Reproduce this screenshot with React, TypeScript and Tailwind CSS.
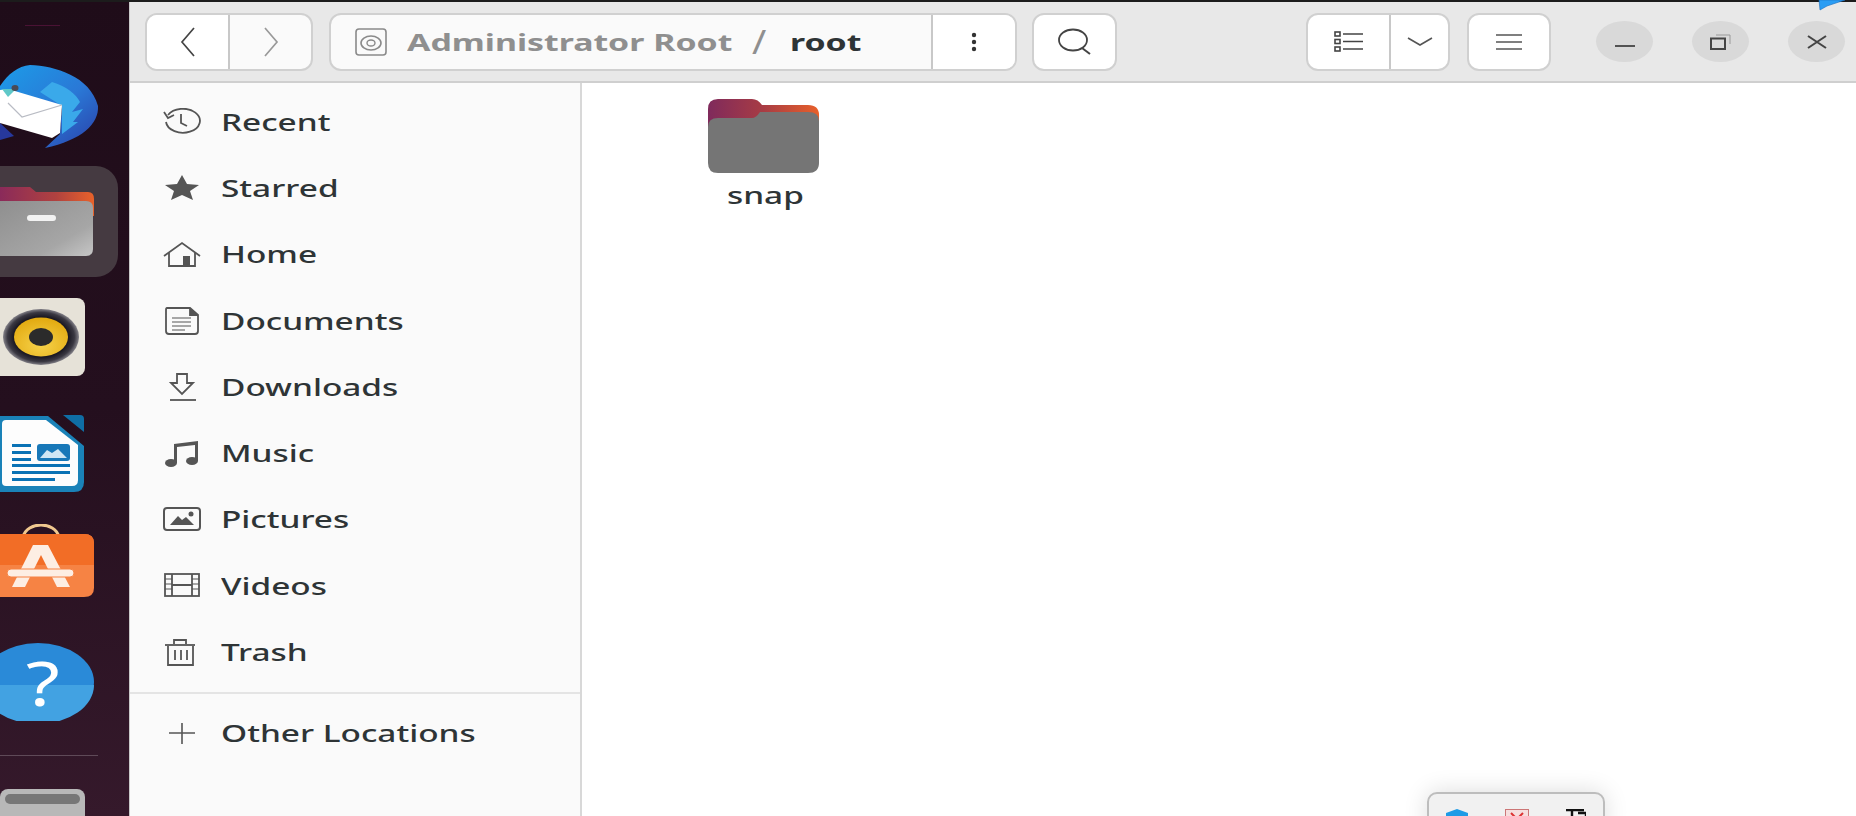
import React from 'react';

const font = "font-['Noto_Sans','DejaVu_Sans',sans-serif]";

// the capture is stretched sideways, so the labels are too
const Stretched = ({ children, className }: { children: React.ReactNode; className: string }) => (
  <span className={`inline-block origin-left whitespace-nowrap ${className}`}>{children}</span>
);

const Thunderbird = () => (
  <svg viewBox="0 0 130 90" className="block h-[90px] w-[130px]">
    <defs>
      <linearGradient id="tb" x1="0" y1="0" x2="1" y2="1">
        <stop offset="0" stopColor="#1c9ce8" />
        <stop offset="0.55" stopColor="#2a78d6" />
        <stop offset="1" stopColor="#2a3fa8" />
      </linearGradient>
    </defs>
    <path d="M0 24 C8 12 18 4 30 3 C55 4 90 14 98 44 C99 62 82 78 45 86 L60 72 L62 44 L8 28 L0 32 Z" fill="url(#tb)" />
    <path d="M52 20 C66 24 76 32 80 40 L72 50 L83 47 L73 60 L78 60 L62 72 L62 44 L40 30 Z" fill="#3aa9ea" />
    <path d="M0 61 L14 74 L0 78 Z" fill="#27389c" />
    <path d="M0 28 L8 27 L62 43 L60 71 L52 76 L0 61 Z" fill="#fff" />
    <path d="M8 41 L22 55 L62 43" fill="none" stroke="#b9bcc4" strokeWidth="1.2" />
    <path d="M2 27 L16 27 L8 35 Z" fill="#5fc8c8" />
    <ellipse cx="15" cy="26" rx="3.5" ry="3" fill="#4a4a55" />
  </svg>
);

const FilesIcon = () => (
  <div className="flex h-[111px] w-[118px] items-center rounded-r-[22px] bg-[#453a41]">
    <svg viewBox="0 0 118 111" className="block h-[111px] w-[118px]">
      <defs>
        <linearGradient id="tab" x1="0" y1="0" x2="1" y2="0">
          <stop offset="0" stopColor="#8a2a5a" />
          <stop offset="0.6" stopColor="#b0423f" />
          <stop offset="1" stopColor="#e8622a" />
        </linearGradient>
        <linearGradient id="front" x1="0" y1="0" x2="1" y2="1">
          <stop offset="0" stopColor="#8f8f8f" />
          <stop offset="0.7" stopColor="#a6a6a6" />
          <stop offset="1" stopColor="#c6c6c6" />
        </linearGradient>
      </defs>
      <path d="M0 21 H30 L36 26 H88 Q94 26 94 33 V50 H0 Z" fill="url(#tab)" />
      <path d="M0 35 H86 Q93 35 93 42 V83 Q93 90 86 90 H0 Z" fill="url(#front)" />
      <rect x="27" y="49" width="29" height="6" rx="3" fill="#f2f2f2" />
    </svg>
  </div>
);

const Rhythmbox = () => (
  <svg viewBox="0 0 130 80" className="block h-[80px] w-[130px]">
    <defs>
      <radialGradient id="ring">
        <stop offset="0.7" stopColor="#17151f" />
        <stop offset="0.88" stopColor="#3a3842" />
        <stop offset="1" stopColor="#85838a" />
      </radialGradient>
      <radialGradient id="cone" cx="0.5" cy="0.7" r="0.7">
        <stop offset="0" stopColor="#f6d24a" />
        <stop offset="1" stopColor="#e2a90f" />
      </radialGradient>
    </defs>
    <rect x="-10" y="0" width="95" height="78" rx="8" fill="#e6e2d8" />
    <ellipse cx="41" cy="39" rx="38" ry="28" fill="url(#ring)" />
    <ellipse cx="41" cy="39" rx="27" ry="19.5" fill="url(#cone)" />
    <ellipse cx="41" cy="39" rx="12" ry="9" fill="#2b2b2b" />
  </svg>
);

const Writer = () => (
  <svg viewBox="0 0 130 80" className="block h-[80px] w-[130px]">
    <path d="M0 4 H48 L84 34 V70 Q84 80 74 80 H0 Z" fill="#1a82b8" />
    <path d="M63 3 H80 Q84 3 84 7 V20 Z" fill="#0f6ea5" />
    <path d="M6 8 H46 L78 33 V68 Q78 74 72 74 H6 Q2 74 2 70 V12 Q2 8 6 8 Z" fill="#fdfdfd" />
    <rect x="37" y="32" width="33" height="17" rx="3" fill="#1878b8" />
    <path d="M40 46 L47 38 L52 41 L58 37 L67 46 Z" fill="#cfe6f4" />
    <rect x="12" y="32" width="19" height="3" fill="#0a72b5" />
    <rect x="12" y="39" width="19" height="3" fill="#0a72b5" />
    <rect x="12" y="46" width="19" height="3" fill="#0a72b5" />
    <rect x="12" y="52" width="58" height="3" fill="#0a72b5" />
    <rect x="12" y="59" width="58" height="3" fill="#0a72b5" />
    <rect x="12" y="66" width="43" height="3" fill="#0a72b5" />
  </svg>
);

const SoftwareIcon = () => (
  <svg viewBox="0 0 130 76" className="block h-[76px] w-[130px]">
    <path d="M23 13 C27 -3 55 -3 59 13" fill="none" stroke="#f0c88f" strokeWidth="3" />
    <path d="M0 10 H84 Q94 10 94 19 V64 Q94 73 84 73 H0 Z" fill="#f68344" />
    <path d="M0 10 H84 Q94 10 94 19 V41 H0 Z" fill="#f26d26" />
    <path d="M33 21 L12 63 H25 L41 31 L57 63 H70 L48 21 Z" fill="#fdeee3" />
    <rect x="7" y="45" width="67" height="8" rx="4" fill="#fdeee3" stroke="#f68344" strokeWidth="1" />
  </svg>
);

const HelpIcon = () => (
  <div className="relative h-[78px] w-[130px]">
    <svg viewBox="0 0 130 78" className="block h-[78px] w-[130px]">
      <ellipse cx="38" cy="39" rx="56" ry="39" fill="#2a8ad8" />
      <path d="M-18 42 H94 A56 39 0 0 1 -18 42 Z" fill="#42a2e2" />
    </svg>
    <div className="absolute left-[26px] top-[2px] text-[62px] leading-[74px] text-white">
      <Stretched className="scale-x-[1.25]">?</Stretched>
    </div>
  </div>
);

const sideIcons: Record<string, React.ReactNode> = {
  Recent: (
    <g fill="none" stroke="#555" strokeWidth="1.8">
      <path d="M5 7 A17 12 0 1 1 3 14" />
      <path d="M1 4 L5 10 L11 7" />
      <path d="M18 6 V15 L24 18" />
    </g>
  ),
  Starred: <path d="M19 1 L24 10 L36 11 L27 17 L30 26 L19 21 L8 26 L11 17 L2 11 L14 10 Z" fill="#555" />,
  Home: (
    <g fill="none" stroke="#555" strokeWidth="1.8">
      <path d="M1 15 L19 2 L37 15" />
      <path d="M6 12 V25 H32 V12" />
      <rect x="20" y="15" width="7" height="10" fill="#555" stroke="none" />
    </g>
  ),
  Documents: (
    <g fill="none" stroke="#555" strokeWidth="1.8">
      <path d="M4 1 H27 L35 8 V24 Q35 27 32 27 H6 Q3 27 3 24 V3 Q3 1 4 1 Z" />
      <path d="M27 1 V8 H35" fill="#555" />
      <path d="M9 11 H28 M9 15 H28 M9 19 H28 M9 23 H22" strokeWidth="1.2" />
    </g>
  ),
  Downloads: (
    <g fill="none" stroke="#555" strokeWidth="1.8">
      <path d="M14 1 H24 V10 H30 L19 21 L8 10 H14 Z" />
      <path d="M7 27 H33" />
    </g>
  ),
  Music: (
    <g fill="#555" stroke="none">
      <path d="M11 5 L35 2 V22 H32 V6 L14 8 V24 H11 Z" />
      <ellipse cx="8" cy="24" rx="6" ry="4" />
      <ellipse cx="29" cy="22" rx="6" ry="4" />
    </g>
  ),
  Pictures: (
    <g fill="none" stroke="#555" strokeWidth="2">
      <rect x="1" y="2" width="36" height="22" rx="3" />
      <path d="M7 19 L15 10 L19 14 L23 11 L31 19 Z" fill="#555" stroke="none" />
      <circle cx="28" cy="8" r="2.5" fill="#555" stroke="none" />
    </g>
  ),
  Videos: (
    <g fill="none" stroke="#555" strokeWidth="1.8">
      <rect x="2" y="2" width="34" height="22" />
      <path d="M9 2 V24 M29 2 V24 M9 13 H29" />
      <path d="M2 7 H9 M2 12 H9 M2 17 H9 M29 7 H36 M29 12 H36 M29 17 H36" strokeWidth="1.2" />
    </g>
  ),
  Trash: (
    <g fill="none" stroke="#555" strokeWidth="1.8">
      <path d="M2 7 H32" />
      <path d="M11 6 V2 H23 V6" />
      <path d="M5 8 V27 H30 V8" />
      <path d="M12 12 V22 M18 12 V22 M24 12 V22" />
    </g>
  ),
};

const places = ['Recent', 'Starred', 'Home', 'Documents', 'Downloads', 'Music', 'Pictures', 'Videos', 'Trash'];

const SideRow = ({ name }: { name: string }) => (
  <div className="flex h-[66.25px] items-center pl-[33px]">
    <svg viewBox="0 0 38 28" className="h-[28px] w-[38px] shrink-0">
      {sideIcons[name]}
    </svg>
    <div className="ml-[20px] text-[23px] font-medium text-[#2e3436]">
      <Stretched className="scale-x-[1.45]">{name}</Stretched>
    </div>
  </div>
);

const App = () => {
  return (
    <div className={`relative flex h-[816px] w-[1856px] flex-col overflow-hidden ${font}`}>
      <div className="h-[2px] bg-[#1c1c1c]" />
      <div className="flex min-h-0 flex-1">
        {/* dock */}
        <div className="w-[130px] shrink-0 overflow-hidden border-r border-[#c9c9c9] bg-gradient-to-b from-[#1f0c19] via-[#240f1e] to-[#35192b]">
          <div className="mt-[23px] h-[1px] w-[35px] translate-x-[25px] bg-[#4a1234]" />
          <div className="mt-[36px]">
            <Thunderbird />
          </div>
          <div className="mt-[14px]">
            <FilesIcon />
          </div>
          <div className="mt-[21px]">
            <Rhythmbox />
          </div>
          <div className="mt-[34px]">
            <Writer />
          </div>
          <div className="mt-[32px]">
            <SoftwareIcon />
          </div>
          <div className="mt-[43px]">
            <HelpIcon />
          </div>
          <div className="mt-[34px] h-[1px] w-[98px] bg-[#5f4a58]" />
          <div className="relative mt-[33px] h-[30px] w-[85px] rounded-t-[8px] bg-[#b8b8b8] p-[5px]">
            <div className="h-[10px] rounded-[5px] bg-[#777]" />
          </div>
        </div>

        {/* window */}
        <div className="flex min-w-0 flex-1 flex-col bg-white">
          <div className="flex h-[81px] shrink-0 items-center border-b-2 border-[#cfcfcf] bg-[#e8e8e8] text-[#2e3436]">
            <div className="ml-[15px] flex h-[58px] w-[168px] rounded-[12px] border-2 border-[#d0d0d0] bg-[#fafafa]">
              <div className="flex w-[83px] items-center justify-center rounded-l-[10px] border-r-2 border-[#c8c8c8] bg-white">
                <svg viewBox="0 0 16 30" className="h-[30px] w-[16px]">
                  <path d="M14 1 L2 15 L14 29" fill="none" stroke="#444" strokeWidth="1.7" />
                </svg>
              </div>
              <div className="flex flex-1 items-center justify-center">
                <svg viewBox="0 0 16 30" className="h-[30px] w-[16px]">
                  <path d="M2 1 L14 15 L2 29" fill="none" stroke="#999" strokeWidth="1.7" />
                </svg>
              </div>
            </div>
            <div className="ml-[16px] flex h-[58px] w-[688px] rounded-[12px] border-2 border-[#d0d0d0] bg-[#fafafa]">
              <div className="flex flex-1 items-center">
                <svg viewBox="0 0 32 28" className="ml-[24px] h-[28px] w-[32px] shrink-0">
                  <rect x="1" y="1" width="30" height="26" rx="3" fill="none" stroke="#8a8a8a" strokeWidth="1.6" />
                  <ellipse cx="16" cy="15" rx="10" ry="7" fill="none" stroke="#8a8a8a" strokeWidth="1.6" />
                  <ellipse cx="16" cy="15" rx="4" ry="3" fill="none" stroke="#8a8a8a" strokeWidth="1.4" />
                </svg>
                <div className="ml-[20px] w-[345px] text-[24px] font-bold leading-[30px] text-[#8f8f8f]">
                  <Stretched className="scale-x-[1.41]">Administrator Root</Stretched>
                </div>
                <div className="text-[32px] leading-none text-[#8f8f8f]">
                  <Stretched className="scale-x-[1.2]">/</Stretched>
                </div>
                <div className="ml-[26px] text-[24px] font-bold leading-[30px] text-[#2e3436]">
                  <Stretched className="scale-x-[1.41]">root</Stretched>
                </div>
              </div>
              <div className="flex w-[84px] items-center justify-center rounded-r-[10px] border-l-2 border-[#c8c8c8] bg-white">
                <svg viewBox="0 0 6 20" className="h-[20px] w-[6px]">
                  <circle cx="3" cy="3" r="2.2" fill="#333" />
                  <circle cx="3" cy="10" r="2.2" fill="#333" />
                  <circle cx="3" cy="17" r="2.2" fill="#333" />
                </svg>
              </div>
            </div>
            <div className="ml-[15px] flex h-[58px] w-[85px] items-center justify-center rounded-[12px] border-2 border-[#d0d0d0] bg-white">
              <svg viewBox="0 0 36 28" className="h-[28px] w-[36px]">
                <ellipse cx="16" cy="12" rx="14" ry="10.5" fill="none" stroke="#444" strokeWidth="1.8" />
                <path d="M25 20 L33 26" stroke="#444" strokeWidth="2" />
              </svg>
            </div>
            <div className="ml-[189px] flex h-[58px] w-[144px] rounded-[12px] border-2 border-[#d0d0d0] bg-white">
              <div className="flex w-[83px] items-center justify-center border-r-2 border-[#c8c8c8]">
                <svg viewBox="0 0 30 22" className="h-[22px] w-[30px]">
                  <g fill="none" stroke="#444" strokeWidth="1.6">
                    <rect x="1" y="1" width="5" height="4" />
                    <rect x="1" y="8.5" width="5" height="4" />
                    <rect x="1" y="16" width="5" height="4" />
                    <path d="M9 3 H29 M9 10.5 H29 M9 18 H29" />
                  </g>
                </svg>
              </div>
              <div className="flex flex-1 items-center justify-center">
                <svg viewBox="0 0 26 12" className="h-[12px] w-[26px]">
                  <path d="M1 2 L13 9 L25 2" fill="none" stroke="#555" strokeWidth="1.6" />
                </svg>
              </div>
            </div>
            <div className="ml-[17px] flex h-[58px] w-[84px] items-center justify-center rounded-[12px] border-2 border-[#d0d0d0] bg-white">
              <svg viewBox="0 0 26 18" className="h-[18px] w-[26px]">
                <path d="M0 2 H26 M0 9 H26 M0 16 H26" stroke="#555" strokeWidth="1.6" />
              </svg>
            </div>
            <div className="ml-[45px] flex h-[41px] w-[57px] items-center justify-center rounded-[50%] bg-[#d9d9d9]">
              <svg viewBox="0 0 20 4" className="mt-[8px] h-[4px] w-[20px]">
                <path d="M0 2 H20" stroke="#444" strokeWidth="1.8" />
              </svg>
            </div>
            <div className="ml-[39px] flex h-[41px] w-[57px] items-center justify-center rounded-[50%] bg-[#d9d9d9]">
              <svg viewBox="0 0 21 16" className="h-[16px] w-[21px]">
                <rect x="1" y="4.5" width="14" height="10.5" fill="none" stroke="#444" strokeWidth="2" />
                <path d="M6 1 H20 V10" fill="none" stroke="#999" strokeWidth="1" />
              </svg>
            </div>
            <div className="ml-[39px] flex h-[41px] w-[57px] items-center justify-center rounded-[50%] bg-[#d9d9d9]">
              <svg viewBox="0 0 20 14" className="h-[14px] w-[20px]">
                <path d="M1 1 L19 13 M19 1 L1 13" stroke="#444" strokeWidth="2.1" />
              </svg>
            </div>
          </div>

          <div className="flex min-h-0 flex-1">
            {/* sidebar */}
            <div className="w-[452px] shrink-0 border-r-2 border-[#d8d8d8] bg-[#fafafa] pt-[6px]">
              {places.map(p => (
                <SideRow key={p} name={p} />
              ))}
              <div className="mt-[7px] h-[2px] bg-[#e4e4e4]" />
              <div className="mt-[6px] flex h-[66px] items-center pl-[33px]">
                <svg viewBox="0 0 38 28" className="h-[28px] w-[38px] shrink-0">
                  <path d="M6 14 H32 M19 4 V25" stroke="#555" strokeWidth="1.6" />
                </svg>
                <div className="ml-[20px] text-[23px] font-medium text-[#2e3436]">
                  <Stretched className="scale-x-[1.45]">Other Locations</Stretched>
                </div>
              </div>
            </div>

            {/* files */}
            <div className="flex-1 pl-[124px] pt-[16px]">
              <div className="flex w-[116px] flex-col items-center">
                <svg viewBox="0 0 112 75" className="block h-[75px] w-[112px]">
                  <defs>
                    <linearGradient id="snapTab" x1="0" y1="0" x2="1" y2="0">
                      <stop offset="0" stopColor="#7f2a5c" />
                      <stop offset="0.5" stopColor="#a83c44" />
                      <stop offset="1" stopColor="#e8602a" />
                    </linearGradient>
                  </defs>
                  <path d="M0 10 Q0 0 10 0 H44 Q50 0 54 6 H100 Q111 6 111 16 V40 H0 Z" fill="url(#snapTab)" />
                  <path d="M0 28 Q0 19 10 19 H44 Q48 19 52 13 H100 Q111 13 111 22 V64 Q111 74 100 74 H10 Q0 74 0 64 Z" fill="#757575" />
                </svg>
                <div className="mt-[4px] text-[23px] font-medium leading-[34px] text-[#2e3436]">
                  <Stretched className="translate-x-[-10px] scale-x-[1.45]">snap</Stretched>
                </div>
              </div>
            </div>
          </div>
        </div>
      </div>

      {/* pointer tip at the top edge */}
      <svg viewBox="0 0 28 11" className="absolute left-[1817px] top-0 h-[11px] w-[28px]">
        <path d="M2 0 H28 L10 6 L3 10 Z" fill="#2a9df4" stroke="#1b6fc0" strokeWidth="0.6" />
      </svg>

      {/* tray popup, cut off by the bottom of the capture */}
      <div className="absolute left-[1427px] top-[792px] flex h-[40px] w-[178px] gap-[37px] rounded-[10px] border-2 border-[#bdbdbd] bg-[#f1f1f1] pl-[17px] pt-[15px] shadow-[0_0_24px_rgba(0,0,0,0.14)]">
        <svg viewBox="0 0 22 12" className="block h-[12px] w-[22px] shrink-0">
          <path d="M0 4 L11 0 L22 4 V12 H0 Z" fill="#1e9be6" />
        </svg>
        <svg viewBox="0 0 24 12" className="block h-[12px] w-[24px] shrink-0">
          <rect x="0.5" y="0.5" width="23" height="12" fill="#f6dede" stroke="#c77" />
          <path d="M6 4 L10 8 M18 4 L14 8" stroke="#d33" strokeWidth="2" />
        </svg>
        <svg viewBox="0 0 20 12" className="block h-[12px] w-[20px] shrink-0">
          <path d="M0 1 H18 M6 1 V12 M12 4 H20 V12" fill="none" stroke="#111" strokeWidth="2.4" />
        </svg>
      </div>
    </div>
  );
};

export default App;
